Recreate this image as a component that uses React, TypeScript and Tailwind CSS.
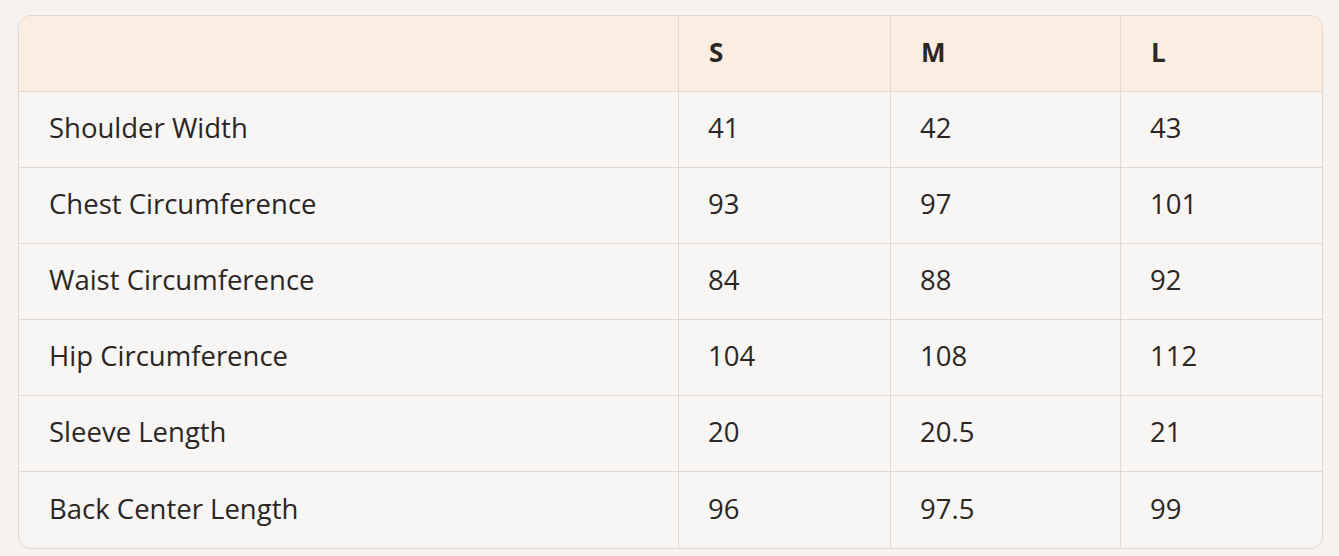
const rows = [
  { label: 'Shoulder Width', s: '41', m: '42', l: '43' },
  { label: 'Chest Circumference', s: '93', m: '97', l: '101' },
  { label: 'Waist Circumference', s: '84', m: '88', l: '92' },
  { label: 'Hip Circumference', s: '104', m: '108', l: '112' },
  { label: 'Sleeve Length', s: '20', m: '20.5', l: '21' },
  { label: 'Back Center Length', s: '96', m: '97.5', l: '99' },
];

const cols = 'grid grid-cols-[659px_212px_230px_1fr]';

export default function App() {
  return (
    <div className="w-[1339px] h-[556px] bg-[#f5f2ef] px-[18px] pt-[15px] font-['Open_Sans',sans-serif] text-[#2a2624]">
      <div className="w-[1305px] rounded-[13px] border border-[#e6d5c9] bg-[#f8f6f4] overflow-hidden">
        <div className={`${cols} h-[76px] bg-[#fcede2] border-b border-[#e6d5c9] text-[26px] font-bold`}>
          <div />
          <div className="border-l border-[#e6d5c9] pl-[30px] pb-[3px] flex items-center">S</div>
          <div className="border-l border-[#e6d5c9] pl-[30px] pb-[3px] flex items-center">M</div>
          <div className="border-l border-[#e6d5c9] pl-[30px] pb-[3px] flex items-center">L</div>
        </div>
        {rows.map((row, i) => (
          <div
            key={row.label}
            className={`${cols} h-[76px] text-[27.5px] ${i < rows.length - 1 ? 'border-b border-[#e6d5c9]' : ''}`}
          >
            <div className="pl-[30px] pb-[3px] flex items-center">{row.label}</div>
            <div className="border-l border-[#e6d5c9] pl-[29px] pb-[3px] flex items-center">{row.s}</div>
            <div className="border-l border-[#e6d5c9] pl-[29px] pb-[3px] flex items-center">{row.m}</div>
            <div className="border-l border-[#e6d5c9] pl-[29px] pb-[3px] flex items-center">{row.l}</div>
          </div>
        ))}
      </div>
    </div>
  );
}
